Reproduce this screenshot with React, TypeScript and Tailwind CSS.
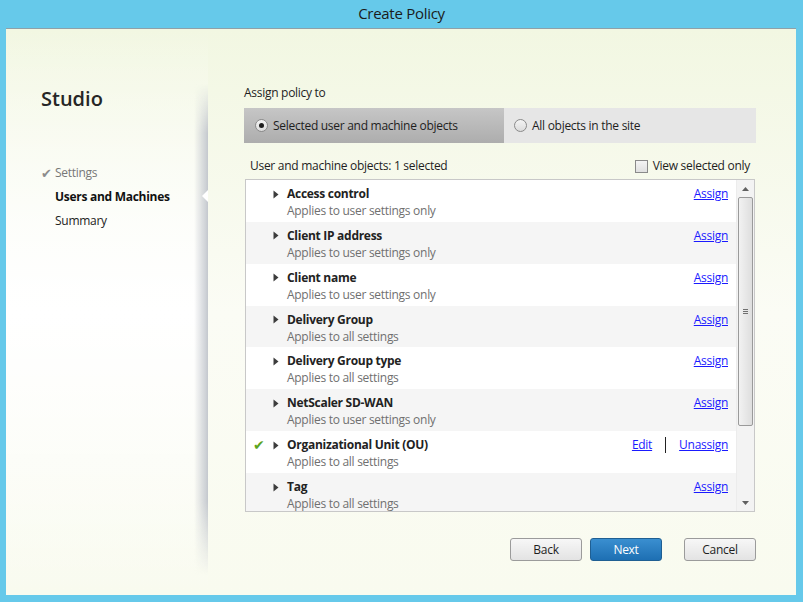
import React from 'react';

interface Filter {
  name: string;
  scope: string;
  assigned?: boolean;
}

const filters: Filter[] = [
  { name: 'Access control', scope: 'Applies to user settings only' },
  { name: 'Client IP address', scope: 'Applies to user settings only' },
  { name: 'Client name', scope: 'Applies to user settings only' },
  { name: 'Delivery Group', scope: 'Applies to all settings' },
  { name: 'Delivery Group type', scope: 'Applies to all settings' },
  { name: 'NetScaler SD-WAN', scope: 'Applies to user settings only' },
  { name: 'Organizational Unit (OU)', scope: 'Applies to all settings', assigned: true },
  { name: 'Tag', scope: 'Applies to all settings' },
];

const font = { fontFamily: '"Open Sans", "Noto Sans", sans-serif' };

function Caret() {
  return (
    <svg width="6" height="9" viewBox="0 0 6 9" className="shrink-0">
      <path d="M0.5 0.5 L5.5 4.5 L0.5 8.5 Z" fill="#3c3c3c" />
    </svg>
  );
}

function Radio({ on }: { on: boolean }) {
  return (
    <span className="w-[13px] h-[13px] rounded-full border border-[#8a8a8a] bg-gradient-to-b from-[#f4f4f4] to-[#dcdcdc] flex items-center justify-center shrink-0">
      {on && <span className="w-[5px] h-[5px] rounded-full bg-[#1e1e1e]" />}
    </span>
  );
}

function Button({ label, primary }: { label: string; primary?: boolean }) {
  return (
    <button
      className={
        primary
          ? 'w-[72px] h-[23px] rounded-[3px] border border-[#1f5f93] bg-gradient-to-b from-[#3a8fd0] to-[#1d6fb3] text-white text-[12px]'
          : 'w-[72px] h-[23px] rounded-[3px] border border-[#9b9b9b] bg-gradient-to-b from-[#f7f7f7] to-[#e3e3e3] text-[#1e1e1e] text-[12px]'
      }
    >
      {label}
    </button>
  );
}

export default function App() {
  return (
    <div className="w-[803px] h-[602px] bg-[#66c9ea] flex flex-col tracking-[-0.28px]" style={font}>
      <div className="h-[28px] flex items-center justify-center text-[15px] text-[#1b1b1b] pb-[1px]">Create Policy</div>

      <div className="ml-[6px] mr-[7px] h-[567px] border-t border-[#8fa0a8] bg-gradient-to-b from-[#f2f7e2] via-[#fbfcf5] to-[#f9fbef] flex">
        {/* left nav */}
        <div className="relative w-[202px] flex bg-gradient-to-b from-transparent via-white to-transparent">
          <div className="flex-1 pl-[35px] pt-[58px]">
            <div className="text-[20px] leading-[24px] font-semibold text-[#262626] tracking-normal">Studio</div>
            <div className="mt-[50px] flex flex-col text-[12px] leading-[24px]">
              <div className="flex items-center text-[#777]">
                <span className="w-[14px] text-[13px] text-[#8c8c8c]">✔</span>
                Settings
              </div>
              <div className="pl-[14px] font-bold text-[#111]">Users and Machines</div>
              <div className="pl-[14px] text-[#222]">Summary</div>
            </div>
          </div>
          <div className="w-[14px] mt-[55px] mb-[20px] bg-gradient-to-r from-transparent to-[#c4c8ce] [mask-image:linear-gradient(to_bottom,transparent,black_10%,black_85%,transparent)]" />
          <div className="absolute right-0 top-[161px] w-0 h-0 border-y-[6px] border-y-transparent border-r-[6px] border-r-white" />
        </div>

        {/* main */}
        <div className="flex-1 pl-[36px] pt-[56px] text-[12px] text-[#1e1e1e]">
          <div className="w-[512px] flex flex-col">
            <div className="leading-[16px]">Assign policy to</div>
            <div className="mt-[7px] h-[35px] flex">
              <div className="w-[260px] bg-gradient-to-b from-[#c6c6c6] to-[#adadad] flex items-center gap-[5px] pl-[11px]">
                <Radio on />
                <span>Selected user and machine objects</span>
              </div>
              <div className="flex-1 bg-[#e6e6e6] flex items-center gap-[5px] pl-[10px]">
                <Radio on={false} />
                <span>All objects in the site</span>
              </div>
            </div>

            <div className="mt-[13px] h-[20px] flex items-center justify-between pl-[6px] pr-[6px]">
              <span>User and machine objects: 1 selected</span>
              <label className="flex items-center gap-[5px]">
                <span className="w-[13px] h-[13px] border border-[#8a8a8a] bg-gradient-to-b from-[#f4f4f4] to-[#e0e0e0]" />
                View selected only
              </label>
            </div>

            <div className="mt-[3px] mx-[1px] h-[333px] border border-[#c8c8c8] bg-white flex overflow-hidden">
              <div className="flex-1 flex flex-col overflow-hidden">
                {filters.map((f, i) => (
                  <div
                    key={f.name}
                    className={`h-[41.86px] shrink-0 flex pt-[6px] pr-[8px] ${i % 2 === 1 ? 'bg-[#f5f5f5]' : 'bg-white'}`}
                  >
                    <div className="w-[27px] shrink-0 h-[16px] flex items-center pl-[7px]">
                      {f.assigned && <span className="text-[#5aa41e] text-[14px] leading-none">✔</span>}
                    </div>
                    <div className="w-[14px] shrink-0 h-[16px] flex items-center">
                      <Caret />
                    </div>
                    <div className="flex-1 flex flex-col">
                      <span className="leading-[16px] font-bold text-[#222]">{f.name}</span>
                      <span className="leading-[16px] mt-[1px] text-[#707070]">{f.scope}</span>
                    </div>
                    <div className="h-[16px] flex items-center leading-[16px] text-[#1a1aff]">
                      {f.assigned ? (
                        <>
                          <span className="underline">Edit</span>
                          <span className="mx-[13px] w-px h-[16px] bg-[#222]" />
                          <span className="underline">Unassign</span>
                        </>
                      ) : (
                        <span className="underline">Assign</span>
                      )}
                    </div>
                  </div>
                ))}
              </div>
              <div className="w-[18px] shrink-0 bg-[#f3f3f3] border-l border-[#ececec] flex flex-col items-center">
                <div className="h-[17px] flex items-center justify-center">
                  <svg width="7" height="4" viewBox="0 0 7 4"><path d="M0 4 L3.5 0 L7 4 Z" fill="#606060" /></svg>
                </div>
                <div className="w-[15px] h-[229px] rounded-[2px] border border-[#9a9a9a] bg-gradient-to-r from-[#f2f2f2] to-[#dedede] flex items-center justify-center">
                  <svg width="5" height="5" viewBox="0 0 5 5">
                    <path d="M0 0.5 H5 M0 2.5 H5 M0 4.5 H5" stroke="#707070" strokeWidth="1" />
                  </svg>
                </div>
                <div className="flex-1" />
                <div className="h-[17px] flex items-center justify-center">
                  <svg width="7" height="4" viewBox="0 0 7 4"><path d="M0 0 L3.5 4 L7 0 Z" fill="#606060" /></svg>
                </div>
              </div>
            </div>

            <div className="mt-[26px] flex justify-end">
              <Button label="Back" />
              <div className="w-[8px]" />
              <Button label="Next" primary />
              <div className="w-[22px]" />
              <Button label="Cancel" />
            </div>
          </div>
        </div>
      </div>
    </div>
  );
}
